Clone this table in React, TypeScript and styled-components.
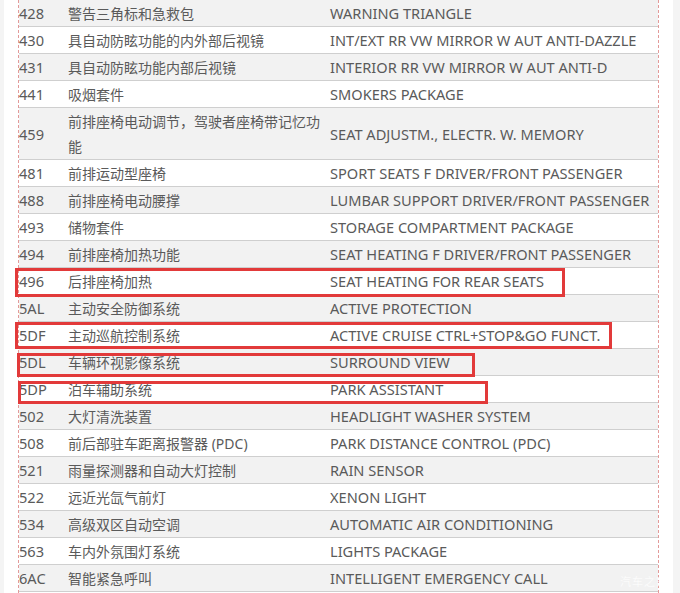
import React from "react";
import styled, { createGlobalStyle } from "styled-components";

const Global = createGlobalStyle`
  html, body { margin: 0; padding: 0; background: #f4f4f4; }
  body { font-family: "Noto Sans", "Noto Sans CJK SC", sans-serif; }
`;

const Page = styled.div`
  position: relative;
  width: 680px;
  height: 593px;
  overflow: hidden;
  background: #f4f4f4;
  padding: 0 7px 0 4px;
  box-sizing: border-box;
`;

const Content = styled.div`
  background: #ffffff;
  height: 100%;
  padding: 0 14px;
`;

const Frame = styled.div`
  border-left: 1px dashed #e39a9a;
  border-right: 1px dashed #e39a9a;
  height: 100%;
`;

const Table = styled.div`
  display: flex;
  flex-direction: column;
`;

const Row = styled.div<{ $alt: boolean }>`
  display: grid;
  grid-template-columns: 49px 262px 1fr;
  background: ${(p) => (p.$alt ? "#f2f2f2" : "#ffffff")};
  border-bottom: 1px solid #cfcfcf;
  line-height: 26px;
  color: #5a5a5a;
  font-family: "Noto Sans", "Noto Sans CJK SC", sans-serif;
`;

const Cell = styled.div<{ $cjk?: boolean }>`
  display: flex;
  align-items: center;
  padding-top: 1px;
  line-height: 25px;
  font-size: ${(p) => (p.$cjk ? "14px" : "14.6px")};
  white-space: normal;
`;

const Highlight = styled.div`
  position: absolute;
  border: 3px solid #e23a3a;
  box-sizing: border-box;
  pointer-events: none;
`;

const Watermark = styled.div`
  position: absolute;
  right: 12px;
  bottom: 4px;
  color: #ffffff;
  opacity: 0.75;
  font-size: 11px;
  font-family: "Noto Sans CJK SC", sans-serif;
  letter-spacing: 1px;
`;

const rows: [string, string, string][] = [
  ["428", "警告三角标和急救包", "WARNING TRIANGLE"],
  ["430", "具自动防眩功能的内外部后视镜", "INT/EXT RR VW MIRROR W AUT ANTI-DAZZLE"],
  ["431", "具自动防眩功能内部后视镜", "INTERIOR RR VW MIRROR W AUT ANTI-D"],
  ["441", "吸烟套件", "SMOKERS PACKAGE"],
  ["459", "前排座椅电动调节，驾驶者座椅带记忆功能", "SEAT ADJUSTM., ELECTR. W. MEMORY"],
  ["481", "前排运动型座椅", "SPORT SEATS F DRIVER/FRONT PASSENGER"],
  ["488", "前排座椅电动腰撑", "LUMBAR SUPPORT DRIVER/FRONT PASSENGER"],
  ["493", "储物套件", "STORAGE COMPARTMENT PACKAGE"],
  ["494", "前排座椅加热功能", "SEAT HEATING F DRIVER/FRONT PASSENGER"],
  ["496", "后排座椅加热", "SEAT HEATING FOR REAR SEATS"],
  ["5AL", "主动安全防御系统", "ACTIVE PROTECTION"],
  ["5DF", "主动巡航控制系统", "ACTIVE CRUISE CTRL+STOP&GO FUNCT."],
  ["5DL", "车辆环视影像系统", "SURROUND VIEW"],
  ["5DP", "泊车辅助系统", "PARK ASSISTANT"],
  ["502", "大灯清洗装置", "HEADLIGHT WASHER SYSTEM"],
  ["508", "前后部驻车距离报警器 (PDC)", "PARK DISTANCE CONTROL (PDC)"],
  ["521", "雨量探测器和自动大灯控制", "RAIN SENSOR"],
  ["522", "远近光氙气前灯", "XENON LIGHT"],
  ["534", "高级双区自动空调", "AUTOMATIC AIR CONDITIONING"],
  ["563", "车内外氛围灯系统", "LIGHTS PACKAGE"],
  ["6AC", "智能紧急呼叫", "INTELLIGENT EMERGENCY CALL"],
];

const boxes = [
  { left: 15, top: 268, width: 550, height: 29 },
  { left: 15, top: 322, width: 597, height: 27 },
  { left: 17, top: 353, width: 458, height: 24 },
  { left: 18, top: 381, width: 470, height: 23 },
];

export default function App() {
  return (
    <Page>
      <Global />
      <Content>
        <Frame>
          <Table>
            {rows.map((r, i) => (
              <Row key={r[0]} $alt={i % 2 === 0}>
                <Cell>{r[0]}</Cell>
                <Cell $cjk>{r[1]}</Cell>
                <Cell>{r[2]}</Cell>
              </Row>
            ))}
          </Table>
        </Frame>
      </Content>
      {boxes.map((b, i) => (
        <Highlight
          key={i}
          style={{ left: b.left, top: b.top, width: b.width, height: b.height }}
        />
      ))}
      <Watermark>汽车之家</Watermark>
    </Page>
  );
}
